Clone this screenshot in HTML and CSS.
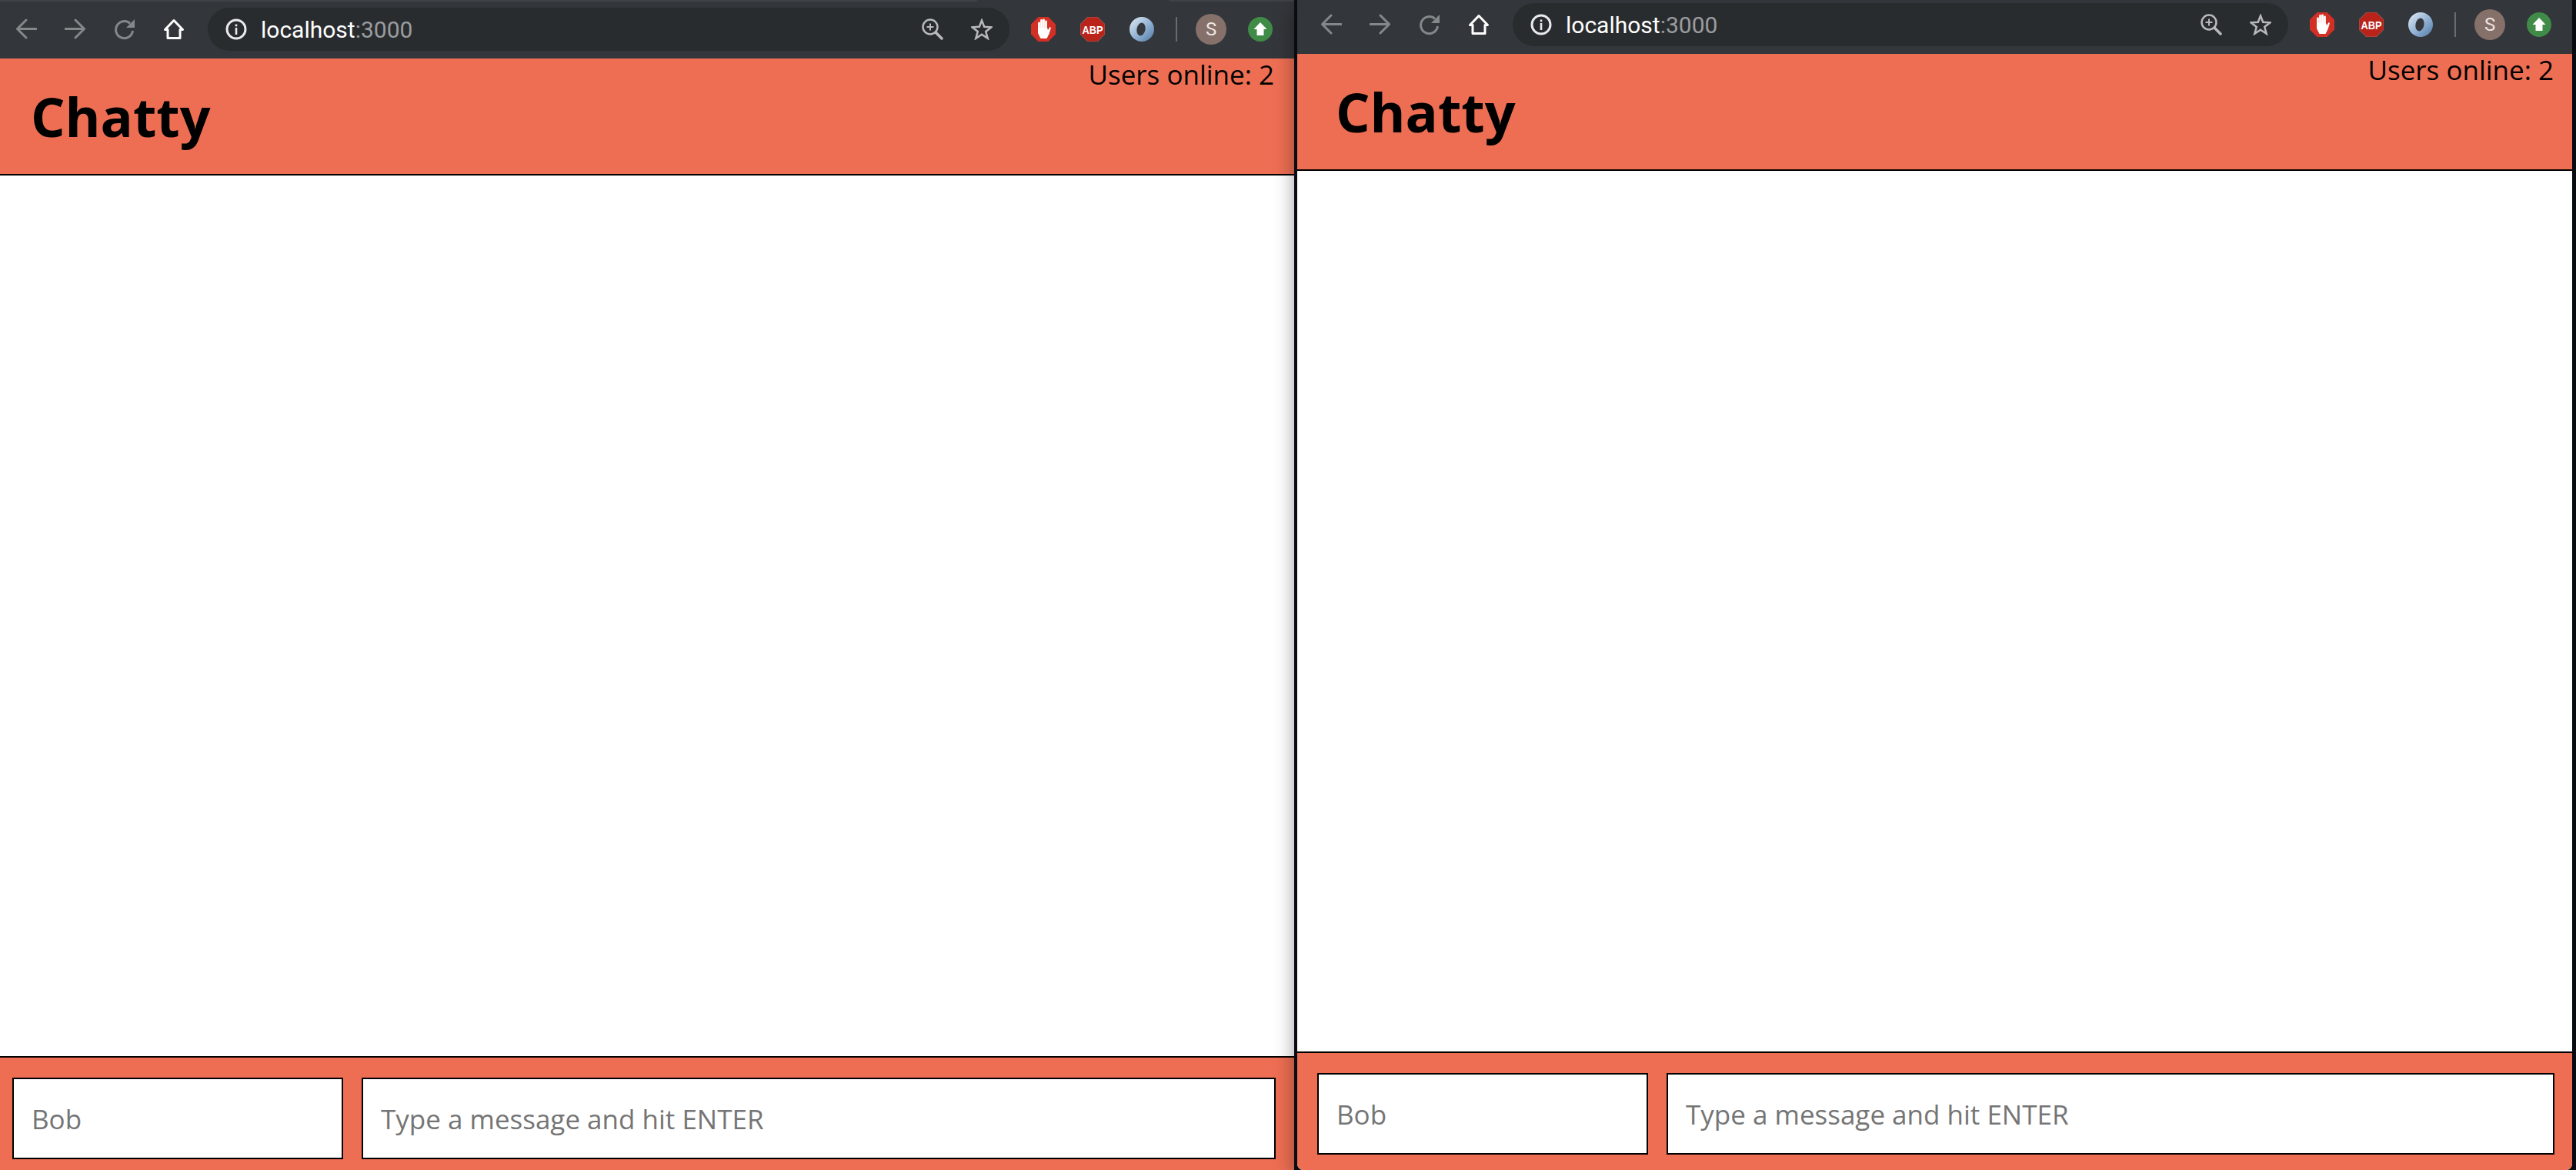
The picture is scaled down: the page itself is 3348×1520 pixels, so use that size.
FILE: index.html
```html
<!DOCTYPE html>
<html lang="en">
<head>
  <meta charset="UTF-8">
  <title>Chatty</title>
  <link rel="stylesheet" href="styles.css">
</head>
<body>
  <!-- shared toolbar icons -->
  <svg class="icon-defs" aria-hidden="true">
    <defs>
      <linearGradient id="ringFill" x1="0" y1="0" x2="1" y2="1">
        <stop offset="0" stop-color="#e3ecf5"/>
        <stop offset="0.55" stop-color="#8fb0d2"/>
        <stop offset="1" stop-color="#4f77a3"/>
      </linearGradient>
      <symbol id="i-back" viewBox="0 0 28 28"><path d="M14 2 L2.500 13.500 L14 25 M2.500 13.500 H27" fill="none" stroke="#85888b" stroke-width="3" stroke-linecap="round" stroke-linejoin="round"/></symbol>
      <symbol id="i-forward" viewBox="0 0 28 28"><path d="M14 2 L25.500 13.500 L14 25 M25.500 13.500 H1" fill="none" stroke="#85888b" stroke-width="3" stroke-linecap="round" stroke-linejoin="round"/></symbol>
      <symbol id="i-reload" viewBox="0 0 28 28"><path d="M21 6.500 A11 11 0 1 0 24.500 16" fill="none" stroke="#85888b" stroke-width="3"/><path d="M27 1 V12 H16 Z" fill="#85888b"/></symbol>
      <symbol id="i-home" viewBox="0 0 28 28"><path d="M14 2.500 L25.500 14.500 H22 V25.500 H6 V14.500 H2.500 Z" fill="none" stroke="#fff" stroke-width="3" stroke-linejoin="round"/></symbol>
      <symbol id="i-info" viewBox="0 0 28 28"><circle cx="14" cy="14" r="12" fill="none" stroke="#e8eaed" stroke-width="3"/><rect x="12.700" y="12" width="2.600" height="9" fill="#e8eaed"/><rect x="12.700" y="7.500" width="2.600" height="2.800" fill="#e8eaed"/></symbol>
      <symbol id="i-zoom" viewBox="0 0 28 28"><circle cx="11" cy="11" r="9.500" fill="none" stroke="#b7b9bb" stroke-width="2.500"/><path d="M6.500 11 H15.500 M11 6.500 V15.500" stroke="#b7b9bb" stroke-width="2"/><path d="M18 18 L26 26" stroke="#b7b9bb" stroke-width="3.500" stroke-linecap="round"/></symbol>
      <symbol id="i-star" viewBox="0 0 28 28"><path d="M14 2.500 L17.200 10.800 L26.500 11.300 L19.200 17 L21.700 25.800 L14 20.800 L6.300 25.800 L8.800 17 L1.500 11.300 L10.800 10.800 Z" fill="none" stroke="#b7b9bb" stroke-width="2.500"/></symbol>
      <symbol id="i-stop" viewBox="0 0 32 32"><path d="M9.500 0 H22.500 L32 9.500 V22.500 L22.500 32 H9.500 L0 22.500 V9.500 Z" fill="#d22f25"/><path d="M10.500 15 V8 M13.500 14 V4.500 M16.500 14 V4 M19.500 15 V6" stroke="#fff" stroke-width="2.800" stroke-linecap="round"/><path d="M9 14 H21 L22 17 L24.500 13 L26 14 L23.500 22 L20.500 28 H12.500 L9 21 Z" fill="#fff"/></symbol>
      <symbol id="i-abp" viewBox="0 0 32 32"><path d="M9.500 0 H22.500 L32 9.500 V22.500 L22.500 32 H9.500 L0 22.500 V9.500 Z" fill="#b9231a" stroke="#9a9a9a" stroke-width="0.500"/><text x="16" y="21.500" text-anchor="middle" textLength="27" lengthAdjust="spacingAndGlyphs" class="abp-text">ABP</text></symbol>
      <symbol id="i-ring" viewBox="0 0 32 32"><circle cx="16" cy="16" r="16" fill="url(#ringFill)"/><ellipse cx="15" cy="16" rx="5.500" ry="8.500" transform="rotate(12 15 16)" fill="#35383c"/></symbol>
      <symbol id="i-update" viewBox="0 0 32 32"><circle cx="16" cy="16" r="16" fill="#3f8b47"/><path d="M16 7 L24.500 16 H20.500 V24 H11.500 V16 H7.500 Z" fill="#fff"/></symbol>
    </defs>
  </svg>

  <main class="desktop">
    <section class="window window-left">
      <div class="toolbar">
        <div class="nav-btns">
          <svg class="tool"><use href="#i-back"/></svg>
          <svg class="tool"><use href="#i-forward"/></svg>
          <svg class="tool"><use href="#i-reload"/></svg>
          <svg class="tool"><use href="#i-home"/></svg>
        </div>
        <div class="omnibox">
          <svg class="tool"><use href="#i-info"/></svg>
          <span class="url">localhost<span class="url-port">:3000</span></span>
          <svg class="tool tool-end"><use href="#i-zoom"/></svg>
          <svg class="tool"><use href="#i-star"/></svg>
        </div>
        <div class="extensions">
          <svg class="ext"><use href="#i-stop"/></svg>
          <svg class="ext"><use href="#i-abp"/></svg>
          <svg class="ext"><use href="#i-ring"/></svg>
          <div class="ext-sep"></div>
          <div class="avatar">S</div>
          <svg class="ext ext-update"><use href="#i-update"/></svg>
        </div>
      </div>
      <header class="header">
        <h1>Chatty</h1>
        <span class="online">Users online: 2</span>
      </header>
      <div class="messages"></div>
      <form class="footer">
        <input class="name-input" type="text" placeholder="Bob">
        <input class="msg-input" type="text" placeholder="Type a message and hit ENTER">
      </form>
    </section>

    <section class="window window-right">
      <div class="toolbar">
        <div class="nav-btns">
          <svg class="tool"><use href="#i-back"/></svg>
          <svg class="tool"><use href="#i-forward"/></svg>
          <svg class="tool"><use href="#i-reload"/></svg>
          <svg class="tool"><use href="#i-home"/></svg>
        </div>
        <div class="omnibox">
          <svg class="tool"><use href="#i-info"/></svg>
          <span class="url">localhost<span class="url-port">:3000</span></span>
          <svg class="tool tool-end"><use href="#i-zoom"/></svg>
          <svg class="tool"><use href="#i-star"/></svg>
        </div>
        <div class="extensions">
          <svg class="ext"><use href="#i-stop"/></svg>
          <svg class="ext"><use href="#i-abp"/></svg>
          <svg class="ext"><use href="#i-ring"/></svg>
          <div class="ext-sep"></div>
          <div class="avatar">S</div>
          <svg class="ext ext-update"><use href="#i-update"/></svg>
        </div>
      </div>
      <header class="header">
        <h1>Chatty</h1>
        <span class="online">Users online: 2</span>
      </header>
      <div class="messages"></div>
      <form class="footer">
        <input class="name-input" type="text" placeholder="Bob">
        <input class="msg-input" type="text" placeholder="Type a message and hit ENTER">
      </form>
    </section>
  </main>
</body>
</html>
```

FILE: styles.css
```css
body {
  margin: 0;
  background-color: #0b0f16;
  font-family: 'Open Sans', sans-serif;
  color: #000;
  overflow: hidden;
}
.icon-defs {
  position: absolute;
  width: 0;
  height: 0;
}
.abp-text {
  font-family: 'Liberation Sans', sans-serif;
  font-weight: bold;
  font-size: 15px;
  fill: #fff;
}
.desktop {
  display: flex;
  height: 100vh;
}
.window {
  display: flex;
  flex-direction: column;
  background: #fff;
  overflow: hidden;
}
.window-left {
  width: 1682px;
  flex: none;
}
.window-right {
  width: 1657px;
  flex: none;
  margin-left: 4px;
  border-radius: 0 0 8px 8px;
  position: relative;
  box-shadow: 0 10px 28px rgba(0,0,0,0.5);
}

/* browser chrome */
.toolbar {
  display: flex;
  align-items: center;
  gap: 28px;
  box-sizing: border-box;
  flex: none;
  padding: 10px 28px 10px 20px;
  height: 76px;
  background-color: #33363a;
}
.window-left .toolbar {
  background-image: linear-gradient(90deg, #3e4145 1270px, transparent 1270px, transparent 1520px, #3e4145 1520px);
  background-size: 100% 2px;
  background-repeat: no-repeat;
}
.window-right .toolbar {
  height: 70px;
  padding: 4px 27px 10px 30px;
}
.nav-btns {
  display: flex;
  gap: 36px;
  flex: none;
}
.tool {
  width: 28px;
  height: 28px;
  flex: none;
}
.omnibox {
  display: flex;
  align-items: center;
  flex: 1;
  gap: 36px;
  height: 56px;
  margin-left: 2px;
  padding: 0 22px 0 23px;
  box-sizing: border-box;
  background-color: #292c2f;
  border-radius: 28px;
}
.url {
  margin-left: -18px;
  color: #fff;
  font-family: Roboto, sans-serif;
  font-size: 30px;
}
.url-port {
  color: #9a9c9f;
}
.tool-end {
  margin-left: auto;
}
.extensions {
  display: flex;
  align-items: center;
  gap: 32px;
  flex: none;
}
.ext {
  width: 32px;
  height: 32px;
  flex: none;
}
.ext-sep {
  width: 2px;
  height: 32px;
  margin: 0 -8px 0 -4px;
  background-color: #6a6d70;
  flex: none;
}
.avatar {
  width: 40px;
  height: 40px;
  flex: none;
  border-radius: 50%;
  background-color: #85706a;
  color: #eee6e2;
  font-family: Roboto, sans-serif;
  font-size: 24px;
  line-height: 40px;
  text-align: center;
}
.ext-update {
  margin-left: -4px;
}

/* chat app */
.header {
  display: flex;
  justify-content: space-between;
  align-items: flex-start;
  flex: none;
  box-sizing: border-box;
  height: 152px;
  padding: 0 26px 0 40px;
  background-color: #ed6e53;
  border-bottom: 2px solid #000;
}
.header h1 {
  margin: 26px 0 0;
  font-size: 70px;
  font-weight: 700;
  line-height: 98px;
}
.online {
  font-size: 35px;
  line-height: 42px;
}
.window-right .header {
  padding-left: 50px;
  padding-right: 24px;
}
.messages {
  flex: 1;
  background-color: #fff;
}
.footer {
  display: flex;
  gap: 24px;
  flex: none;
  padding: 26px 24px 14px 16px;
  background-color: #ed6e53;
  border-top: 2px solid #000;
}
.window-right .footer {
  padding: 26px 23px 20px 26px;
}
.footer input {
  box-sizing: border-box;
  height: 106px;
  padding: 0 23px;
  border: 2px solid #000;
  border-radius: 0;
  background: #fff;
  font-family: 'Open Sans', sans-serif;
  font-size: 35px;
}
.footer input::placeholder {
  color: #757575;
}
.name-input {
  width: 430px;
  flex: none;
}
.msg-input {
  flex: 1;
  min-width: 0;
}
```
